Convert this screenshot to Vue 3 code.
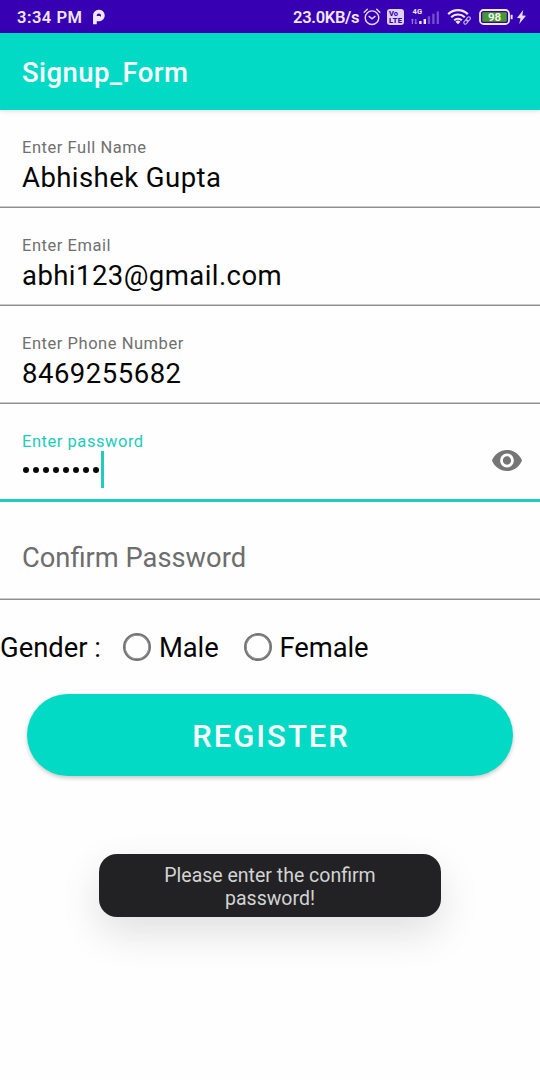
<script setup>
const fields = [
  { label: 'Enter Full Name', value: 'Abhishek Gupta', kind: 'name' },
  { label: 'Enter Email', value: 'abhi123@gmail.com', kind: 'email' },
  { label: 'Enter Phone Number', value: '8469255682', kind: 'phone' },
]
const genders = ['Male', 'Female']
const dots = 8
</script>

<template>
  <div class="screen">
    <header class="status">
      <span class="time">3:34 PM</span>
      <svg class="parking" width="14" height="18" viewBox="0 0 14 18">
        <path d="M2.9 16.2V7.6a4 4 0 1 1 4.6 3.9H6.4V8" fill="none" stroke="#f1e6fd" stroke-width="3.7" />
      </svg>
      <span class="speed">23.0KB/s</span>
      <svg class="alarm" width="18" height="18" viewBox="0 0 18 18" fill="none" stroke="#e6d8fa" stroke-width="1.4" stroke-linecap="round">
        <circle cx="9" cy="9.7" r="6.8" />
        <path d="M1.2 4.2 4.3 1.3M16.8 4.2 13.7 1.3M6.1 8.4 9 10.8 12 8.4" />
      </svg>
      <svg class="volte" width="17" height="16" viewBox="0 0 17 16">
        <rect width="17" height="16" rx="3" fill="#dfd2f8" />
        <text x="2" y="7.4" textLength="9" class="lte">Vo</text>
        <text x="2" y="14.4" textLength="13" class="lte">LTE</text>
      </svg>
      <svg class="signal" width="28" height="19" viewBox="0 0 28 19">
        <text x="1.6" y="7.4" class="net" textLength="9.5">4G</text>
        <path d="M1.4 17v-5M4.8 12v5" stroke="#9675dd" stroke-width="1.2" />
        <path d="m0 13.5 1.4-1.6 1.4 1.6m.6 2L4.8 17l1.4-1.5" fill="none" stroke="#9675dd" stroke-width=".8" />
        <path d="M9.4 17v-3M13.8 17v-5" stroke="#f1e6fd" stroke-width="2.4" />
        <path d="M18 17V9.3M22.4 17V6.7M26.8 17V4.4" stroke="#7550d0" stroke-width="2.3" />
      </svg>
      <svg class="wifi" width="25" height="18" viewBox="0 0 25 18">
        <g fill="none" stroke="#f1e6fd" stroke-width="2.2">
          <path d="M1.2 6.1a14 14 0 0 1 19.6 0" />
          <path d="M4.2 9.3a9.7 9.7 0 0 1 13.6 0" />
          <path d="M7.2 12.3a5.4 5.4 0 0 1 7.6 0" />
        </g>
        <path d="m8.5 13.7 2.5 2.5 2.5-2.5a3.6 3.6 0 0 0-5 0Z" fill="#f1e6fd" />
        <g fill="none" stroke="#c9b4f0" stroke-width="1.1">
          <rect x="-2.4" y="-1.5" width="4.8" height="3" rx="1.5" transform="translate(21.3 11) rotate(-48)" />
          <rect x="-2.4" y="-1.5" width="4.8" height="3" rx="1.5" transform="translate(18.9 14) rotate(-48)" />
        </g>
      </svg>
      <svg class="battery" width="35" height="16" viewBox="0 0 35 16">
        <rect x="1" y="1" width="29" height="14" rx="3.6" fill="none" stroke="#f3eafd" stroke-width="1.8" />
        <rect x="3.3" y="3.2" width="24.4" height="9.6" rx="1" fill="#47992f" />
        <path d="M32.6 5.8v4.4" stroke="#f3eafd" stroke-width="2" />
        <text x="15.6" y="12" text-anchor="middle" class="charge">98</text>
      </svg>
      <svg class="bolt" width="9" height="14" viewBox="0 0 9 14">
        <path d="M6.2 0 0 7.9l3.5.3L2.2 14 9 5.8l-3.7-.3Z" fill="#e9dcfb" />
      </svg>
    </header>

    <div class="appbar">Signup_Form</div>

    <main>
      <div v-for="f in fields" :key="f.label" class="field">
        <div class="label">{{ f.label }}</div>
        <div class="value" :class="f.kind">{{ f.value }}</div>
      </div>

      <div class="field active">
        <div class="label">Enter password</div>
        <div class="secret">
          <i v-for="n in dots" :key="n" class="dot"></i>
          <b class="caret"></b>
        </div>
        <svg class="eye" width="30" height="21" viewBox="1 4.5 22 15" preserveAspectRatio="none">
          <path fill="#757575" d="M12 4.5C7 4.5 2.73 7.61 1 12c1.73 4.39 6 7.5 11 7.5s9.27-3.11 11-7.5c-1.73-4.39-6-7.5-11-7.5zM12 17c-2.76 0-5-2.24-5-5s2.24-5 5-5 5 2.24 5 5-2.24 5-5 5zm0-8c-1.66 0-3 1.34-3 3s1.34 3 3 3 3-1.34 3-3-1.34-3-3-3z" />
        </svg>
      </div>

      <div class="field empty"><span>Confirm Password</span></div>

      <div class="gender">
        <span class="caption">Gender :</span>
        <label v-for="g in genders" :key="g" class="option">
          <i class="ring"></i><span>{{ g }}</span>
        </label>
      </div>

      <button class="register">REGISTER</button>
    </main>

    <div class="toast">Please enter the confirm<br />password!</div>
  </div>
</template>

<style>
body { background: #fff; }
</style>

<style scoped>
.screen {
  position: relative;
  width: 540px;
  height: 1080px;
  overflow: hidden;
  background: #fefefe;
  color: #060606;
  font-family: Roboto, "Liberation Sans", sans-serif;
}
.status {
  display: flex;
  align-items: center;
  height: 33px;
  box-sizing: border-box;
  padding-left: 17px;
  background: #3700b3;
  color: #f1e6fd;
  font-size: 16.5px;
  font-weight: 600;
  white-space: nowrap;
}
.time { width: 75px; padding-top: 1px; letter-spacing: .5px; }
.parking { margin-right: 187px; }
.speed { width: 70px; padding-top: 1px; letter-spacing: -.3px; }
.alarm { flex: none; }
.volte { margin-left: 6px; }
.signal { margin-left: 7px; margin-top: -1px; }
.wifi { margin-left: 8px; }
.battery { margin-left: 7px; }
.bolt { margin-left: 3px; }
.lte { font-size: 7.5px; font-weight: 800; fill: #3700b3; }
.net { font-size: 7.5px; font-weight: 700; fill: #f1e6fd; }
.charge { font-size: 11.5px; font-weight: 700; fill: #f1f5e9; }
.appbar {
  position: relative;
  height: 77px;
  line-height: 80px;
  padding-left: 22px;
  background: #03dac5;
  color: #f8fffe;
  font-size: 27.5px;
  font-weight: 500;
  letter-spacing: .42px;
  box-shadow: 0 1px 5px rgba(0, 0, 0, .13);
}
.field {
  position: relative;
  height: 98px;
  box-sizing: border-box;
  padding: 28px 22px 0;
  border-bottom: 1px solid #8e8e8e;
  box-shadow: inset 0 -1px #c9c9c9;
}
.label {
  height: 20px;
  line-height: 20px;
  font-size: 16.5px;
  letter-spacing: .54px;
  color: #707070;
}
.value {
  line-height: 40px;
  font-size: 27.5px;
  letter-spacing: .44px;
}
.phone { letter-spacing: .5px; }
.active { border-bottom: 3px solid #21ccba; box-shadow: none; }
.active .label { color: #21ccba; }
.secret { display: flex; align-items: center; height: 37px; margin-top: -1px; padding-left: 1px; }
.dot { width: 6px; height: 6px; margin-right: 4px; border-radius: 50%; background: #080808; }
.caret { width: 3px; height: 37px; margin-left: -2px; background: #21ccba; }
.eye { position: absolute; right: 18px; top: 46px; }
.empty {
  padding-top: 36px;
  line-height: 40px;
  font-size: 27.3px;
  color: #6d6d6d;
}
.gender {
  display: flex;
  align-items: center;
  height: 94px;
  box-sizing: border-box;
  padding-top: 2px;
  font-size: 27.4px;
  letter-spacing: -.1px;
}
.caption { width: 123px; letter-spacing: 0; }
.option { display: flex; align-items: center; margin-right: 25px; }
.ring {
  box-sizing: border-box;
  width: 28px;
  height: 28px;
  margin: -2px 8px 0 0;
  border: 2px solid #747474;
  box-shadow: inset 0 0 0 .7px #747474;
  border-radius: 50%;
}
.register {
  display: block;
  width: 486px;
  height: 82px;
  margin: 0 auto;
  padding: 3px 0 0 2px;
  border: 0;
  border-radius: 41px;
  background: #03dac5;
  color: #f8fffe;
  font: 500 31px Roboto, "Liberation Sans", sans-serif;
  letter-spacing: 2px;
  box-shadow: 0 2px 4px rgba(0, 0, 0, .22);
}
.toast {
  position: absolute;
  left: 99px;
  top: 854px;
  width: 342px;
  height: 63px;
  box-sizing: border-box;
  padding-top: 10px;
  border-radius: 18px;
  background: #222224;
  color: #d3d3d3;
  font-size: 19.5px;
  line-height: 23px;
  text-align: center;
  box-shadow: 0 16px 40px rgba(0, 0, 0, .12);
}
</style>
